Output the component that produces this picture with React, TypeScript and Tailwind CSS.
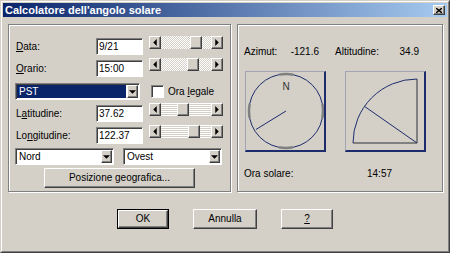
const raised =
  'border border-t-white border-l-white border-r-[#404040] border-b-[#404040] shadow-[inset_-1px_-1px_0_#808080] bg-[#d4d0c8]'
const sunken =
  'border border-t-[#808080] border-l-[#808080] border-r-white border-b-white shadow-[inset_1px_1px_0_#404040]'
const etched = 'border border-[#808080] shadow-[1px_1px_0_#ffffff,inset_1px_1px_0_#ffffff]'

function Arrow({ dir }: { dir: 'left' | 'right' | 'down' }) {
  const d = dir === 'left' ? 'M3 0 L0 3 L3 6 Z' : dir === 'right' ? 'M0 0 L3 3 L0 6 Z' : 'M0 0 L6 0 L3 3 Z'
  const w = dir === 'down' ? 7 : 4
  const h = dir === 'down' ? 4 : 7
  return (
    <svg width={w} height={h} viewBox={dir === 'down' ? '0 0 6 3' : '0 0 3 6'}>
      <path d={d} fill="#000" />
    </svg>
  )
}

function ScrollBar({ pos, striped }: { pos: number; striped?: boolean }) {
  const track = striped
    ? 'bg-[repeating-linear-gradient(#ffffff_0_1px,#d4d0c8_1px_2px)]'
    : 'bg-[repeating-conic-gradient(#ffffff_0_25%,#d4d0c8_0_50%)] bg-[length:2px_2px]'
  return (
    <div className="flex w-[74px] h-[13px] -mt-[2px]">
      <div className={`${raised} w-[12px] h-full flex items-center justify-center`}>
        <Arrow dir="left" />
      </div>
      <div className={`flex flex-1 ${track}`}>
        <div style={{ width: pos }} />
        <div className={`${raised} w-[12px] h-full`} />
      </div>
      <div className={`${raised} w-[12px] h-full flex items-center justify-center`}>
        <Arrow dir="right" />
      </div>
    </div>
  )
}

function TextBox({ value }: { value: string }) {
  return (
    <div className={`${sunken} bg-white w-[47px] h-[17px] pl-[2px] flex items-center leading-none`}>
      {value}
    </div>
  )
}

function Combo({ value, width, selected }: { value: string; width: string; selected?: boolean }) {
  return (
    <div className={`${sunken} bg-white ${width} h-[17px] flex p-[1px]`}>
      <div
        className={`flex-1 flex items-center pl-[2px] leading-none mr-[1px] ${
          selected ? 'bg-[#0a246a] text-white' : ''
        }`}
      >
        {value}
      </div>
      <div className={`${raised} w-[11px] h-full flex items-center justify-center`}>
        <Arrow dir="down" />
      </div>
    </div>
  )
}

function FieldRow({ label, value, pos, striped, mt }: { label: React.ReactNode; value: string; pos: number; striped?: boolean; mt: string }) {
  return (
    <div className={`flex items-start ${mt}`}>
      <div className="w-[81px] pl-[1px] pt-[4px] leading-none">{label}</div>
      <TextBox value={value} />
      <div className="ml-[6px]">
        <ScrollBar pos={pos} striped={striped} />
      </div>
    </div>
  )
}

function Button({ children, width, isDefault }: { children: React.ReactNode; width: string; isDefault?: boolean }) {
  if (isDefault) {
    return (
      <div className={`${width} h-[20px] border border-black`}>
        <div className={`${raised} w-full h-full flex items-center justify-center leading-none`}>{children}</div>
      </div>
    )
  }
  return <div className={`${raised} ${width} h-[20px] flex items-center justify-center leading-none`}>{children}</div>
}

function Compass() {
  const az = (-121.6 * Math.PI) / 180
  const cx = 40
  const cy = 39
  const r = 37
  return (
    <svg width="78" height="78" viewBox="0 0 78 78" className="block">
      <circle cx={cx} cy={cy} r={r} fill="none" stroke="#1c2c6c" strokeWidth="1" />
      <circle
        cx={cx}
        cy={cy}
        r={r}
        fill="none"
        stroke="#808080"
        strokeWidth="2.5"
        strokeDasharray="14 44.1"
        strokeDashoffset="7"
      />
      <text x={cx} y={18} textAnchor="middle" fontSize="10" fill="#333" fontFamily="Liberation Sans, Arial, sans-serif">
        N
      </text>
      <line x1={cx} y1={cy} x2={cx + r * Math.sin(az) * 0.95} y2={cy - r * Math.cos(az) * 0.95} stroke="#1c2c6c" strokeWidth="1" />
    </svg>
  )
}

function AltitudeChart() {
  const alt = (34.9 * Math.PI) / 180
  const c = 71
  const r = 64
  return (
    <svg width="78" height="78" viewBox="0 0 78 78" className="block">
      <line x1={c} y1={7} x2={c} y2={c} stroke="#808080" strokeWidth="2" />
      <line x1={7} y1={c} x2={c} y2={c} stroke="#808080" strokeWidth="2" />
      <path d={`M${c - r} ${c} A${r} ${r} 0 0 1 ${c} ${c - r}`} fill="none" stroke="#1c2c6c" strokeWidth="1" />
      <line x1={c - r * Math.cos(alt)} y1={c - r * Math.sin(alt)} x2={c} y2={c} stroke="#1c2c6c" strokeWidth="1" />
    </svg>
  )
}

export default function App() {
  return (
    <div className="w-[450px] h-[253px] font-['Liberation_Sans',Arial,sans-serif] text-[10px] text-black">
      <div className="w-full h-full border border-t-[#d4d0c8] border-l-[#d4d0c8] border-r-[#404040] border-b-[#404040]">
        <div className="w-full h-full border border-t-white border-l-white border-r-[#808080] border-b-[#808080] bg-[#d4d0c8] p-[1px] flex flex-col">
          {/* barra del titolo */}
          <div className="h-[14px] flex items-center justify-between bg-[linear-gradient(to_right,#0a246a,#a6caf0)] pl-[2px] pr-[2px]">
            <span className="text-white font-bold text-[11px] leading-none">Calcolatore dell'angolo solare</span>
            <div className={`${raised} w-[12px] h-[10px] flex items-center justify-center`}>
              <svg width="6" height="5" viewBox="0 0 6 5">
                <path d="M0 0 L6 5 M6 0 L0 5" stroke="#000" strokeWidth="1.4" />
              </svg>
            </div>
          </div>

          <div className="flex gap-[6px] pl-[5px] pt-[7px]">
            {/* gruppo sinistro */}
            <div className={`${etched} w-[223px] h-[168px] pl-[6px] pt-[13px] flex flex-col`}>
              <FieldRow label={<><u>D</u>ata:</>} value="9/21" pos={29} mt="mt-0" />
              <FieldRow label={<><u>O</u>rario:</>} value="15:00" pos={26} mt="mt-[5px]" />
              <div className="flex items-center mt-[6px]">
                <Combo value="PST" width="w-[125px]" selected />
                <div className={`${sunken} bg-white w-[13px] h-[13px] ml-[11px]`} />
                <span className="ml-[4px] leading-none">
                  Ora <u>l</u>egale
                </span>
              </div>
              <FieldRow label={<>L<u>a</u>titudine:</>} value="37.62" pos={16} striped mt="mt-[5px]" />
              <FieldRow label={<>Lo<u>n</u>gitudine:</>} value="122.37" pos={27} striped mt="mt-[5px]" />
              <div className="flex gap-[9px] mt-[4px]">
                <Combo value="Nord" width="w-[99px]" />
                <Combo value="Ovest" width="w-[99px]" />
              </div>
              <div className="flex justify-center pr-[6px] mt-[3px]">
                <Button width="w-[151px]">Posizione geografica...</Button>
              </div>
            </div>

            {/* gruppo destro */}
            <div className={`${etched} w-[206px] h-[168px] pl-[6px] pt-[21px] flex flex-col`}>
              <div className="flex leading-[12px]">
                <div className="w-[82px] flex justify-between pr-[7px]">
                  <span>Azimut:</span>
                  <span>-121.6</span>
                </div>
                <div className="w-[84px] ml-[9px] flex justify-between">
                  <span>Altitudine:</span>
                  <span>34.9</span>
                </div>
              </div>
              <div className="flex gap-[19px] mt-[13px] ml-[1px]">
                <div className="w-[81px] h-[81px] border-t border-l border-[#a0a4b4] border-r-2 border-b-2 border-r-[#1c2c6c] border-b-[#1c2c6c]">
                  <Compass />
                </div>
                <div className="w-[81px] h-[81px] border-t border-l border-[#a0a4b4] border-r-2 border-b-2 border-r-[#1c2c6c] border-b-[#1c2c6c]">
                  <AltitudeChart />
                </div>
              </div>
              <div className="flex leading-[12px] mt-[16px]">
                <span className="w-[123px]">Ora solare:</span>
                <span>14:57</span>
              </div>
            </div>
          </div>

          <div className="flex justify-center gap-[24px] mt-[17px]">
            <Button width="w-[52px]" isDefault>
              OK
            </Button>
            <Button width="w-[64px]">Annulla</Button>
            <Button width="w-[52px]">
              <u>?</u>
            </Button>
          </div>
        </div>
      </div>
    </div>
  )
}
